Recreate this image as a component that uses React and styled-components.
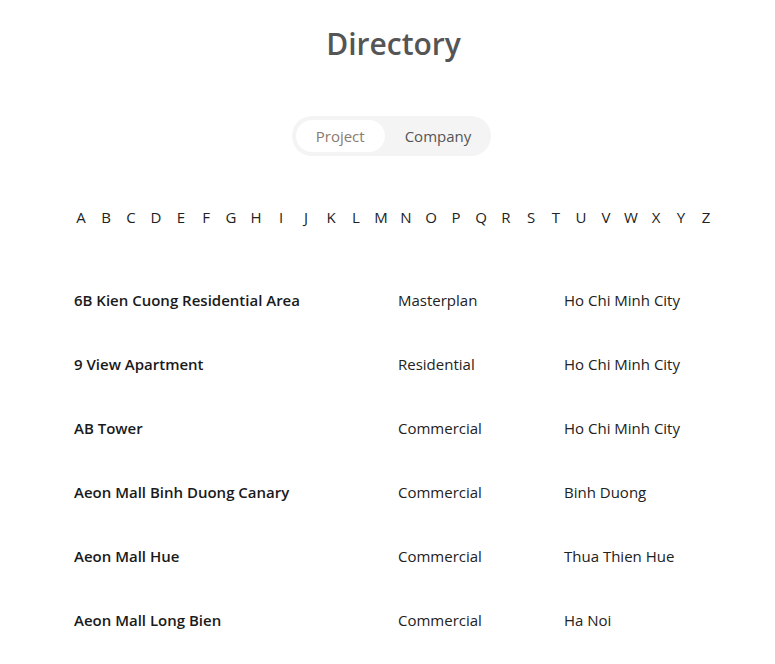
import React from 'react';
import styled, { createGlobalStyle } from 'styled-components';

const GlobalStyle = createGlobalStyle`
  body {
    margin: 0;
    background: #fff;
    font-family: "Open Sans", "Noto Sans", sans-serif;
  }
`;

const Page = styled.div`
  padding: 22px 62px 0 74px;
`;

const Title = styled.h1`
  margin: 0;
  text-align: center;
  font-size: 30px;
  font-weight: 600;
  color: #555;
  line-height: 44px;
`;

const ToggleWrap = styled.div`
  display: flex;
  justify-content: center;
  margin-top: 50px;
  padding-right: 4px;
`;

const Toggle = styled.div`
  display: flex;
  align-items: center;
  background: #f4f4f4;
  border-radius: 20px;
  padding: 4px;
  gap: 4px;
`;

const ToggleItem = styled.button`
  border: none;
  background: ${p => (p.$active ? '#fff' : 'transparent')};
  color: ${p => (p.$active ? '#8a7b6e' : '#555')};
  font-family: inherit;
  font-size: 15px;
  height: 32px;
  padding: 0 ${p => (p.$active ? '20px' : '16px')};
  border-radius: 16px;
  cursor: pointer;
`;

const Letters = styled.div`
  display: flex;
  justify-content: center;
  margin-top: 49px;
`;

const Letter = styled.a`
  flex-shrink: 0;
  width: 25px;
  text-align: center;
  font-size: 15px;
  color: #222;
  line-height: 24px;
`;

const Table = styled.div`
  margin-top: 59px;
`;

const Row = styled.div`
  display: grid;
  grid-template-columns: 324px 166px 1fr;
  height: 64px;
  font-size: 15px;
  line-height: 24px;
  color: #222;
`;

const Name = styled.div`
  font-weight: 600;
  color: #1a1a1a;
`;

const Cell = styled.div``;

const letters = 'ABCDEFGHIJKLMNOPQRSTUVWXYZ'.split('');

const projects = [
  ['6B Kien Cuong Residential Area', 'Masterplan', 'Ho Chi Minh City'],
  ['9 View Apartment', 'Residential', 'Ho Chi Minh City'],
  ['AB Tower', 'Commercial', 'Ho Chi Minh City'],
  ['Aeon Mall Binh Duong Canary', 'Commercial', 'Binh Duong'],
  ['Aeon Mall Hue', 'Commercial', 'Thua Thien Hue'],
  ['Aeon Mall Long Bien', 'Commercial', 'Ha Noi'],
];

const App = () => {
  return (
    <>
      <GlobalStyle />
      <Page>
        <Title>Directory</Title>
        <ToggleWrap>
          <Toggle>
            <ToggleItem $active>Project</ToggleItem>
            <ToggleItem>Company</ToggleItem>
          </Toggle>
        </ToggleWrap>
        <Letters>
          {letters.map(l => (
            <Letter key={l}>{l}</Letter>
          ))}
        </Letters>
        <Table>
          {projects.map(([name, type, city]) => (
            <Row key={name}>
              <Name>{name}</Name>
              <Cell>{type}</Cell>
              <Cell>{city}</Cell>
            </Row>
          ))}
        </Table>
      </Page>
    </>
  );
};

export default App;
